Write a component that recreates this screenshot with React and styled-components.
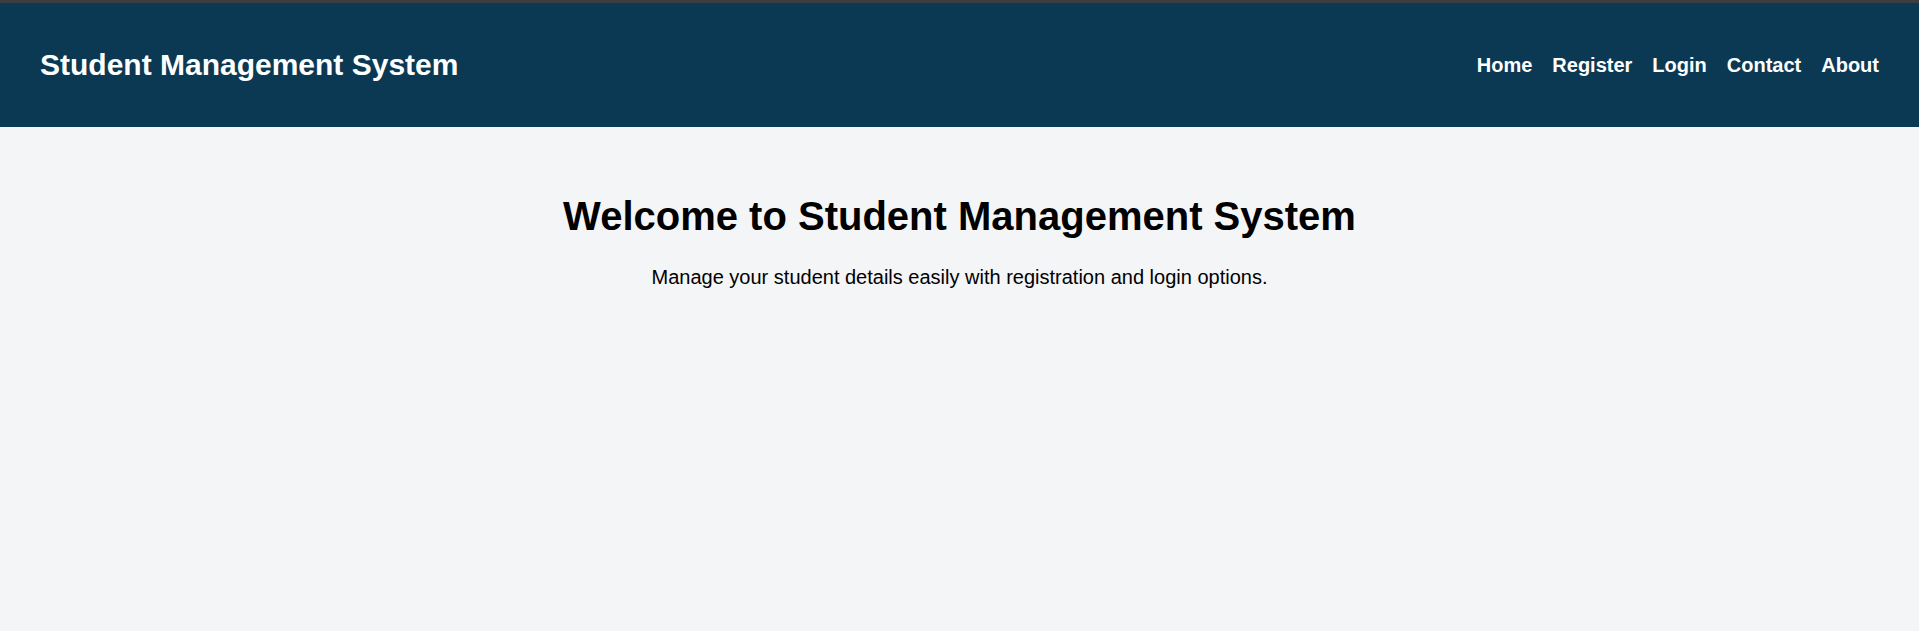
import React from "react";
import styled, { createGlobalStyle } from "styled-components";

const Global = createGlobalStyle`
  html, body { margin: 0; padding: 0; }
  body {
    font-family: "Liberation Sans", Arial, sans-serif;
    background: #f4f5f7;
    color: #000;
    min-height: 631px;
  }
`;

const TopStrip = styled.div`
  height: 3px;
  background: #3b3d3f;
`;

const Header = styled.header`
  background: #0b3954;
  color: #fff;
  padding: 25px 40px;
  display: flex;
  align-items: center;
  justify-content: space-between;
`;

const Brand = styled.h1`
  margin: 20px 0;
  font-size: 30px;
  font-weight: bold;
`;

const Nav = styled.nav`
  display: flex;
  gap: 20px;
`;

const NavLink = styled.a`
  color: #fff;
  text-decoration: none;
  font-weight: bold;
  font-size: 20px;
`;

const Main = styled.main`
  padding: 40px;
  text-align: center;
`;

const Title = styled.h1`
  font-size: 40px;
  margin: 26.8px 0;
`;

const Lead = styled.p`
  font-size: 20px;
  margin: 20px 0;
`;

export default function App() {
  return (
    <>
      <Global />
      <TopStrip />
      <Header>
        <Brand>Student Management System</Brand>
        <Nav>
          {["Home", "Register", "Login", "Contact", "About"].map((l) => (
            <NavLink key={l} href="#">{l}</NavLink>
          ))}
        </Nav>
      </Header>
      <Main>
        <Title>Welcome to Student Management System</Title>
        <Lead>Manage your student details easily with registration and login options.</Lead>
      </Main>
    </>
  );
}
